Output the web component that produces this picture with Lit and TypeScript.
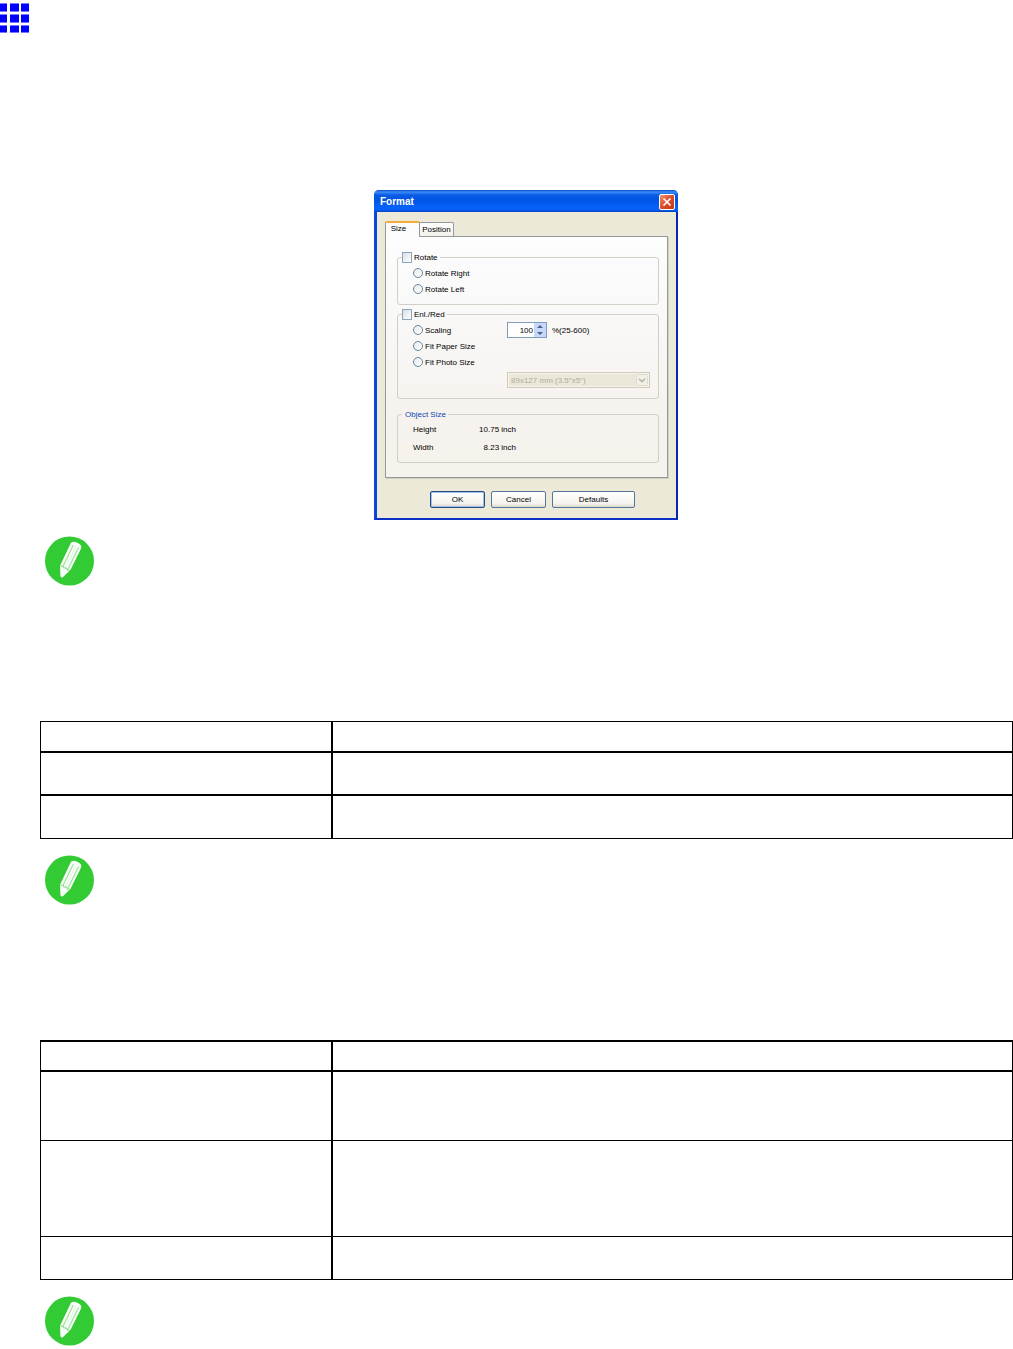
import { LitElement, html, css, svg } from "lit";
import { customElement, property } from "lit/decorators.js";

@customElement("note-icon")
class NoteIcon extends LitElement {
  static styles = css`
    :host { display: block; }
    .icon { display: block; width: 50px; height: 50px; }
  `;
  render() {
    return html`<svg class="icon" viewBox="0 0 50 50" aria-hidden="true">
      <circle cx="24.5" cy="25" r="24.5" fill="#33cb33" />
      <path d="M26 6.8 Q27.4 5 30.4 6 Q34.6 7.2 36 9.4 Q36.8 11 35.6 13.4 L25.4 34 L17.8 41.2 Q15.6 42 15.4 39.4 L15 29.8 Z" fill="#fafefa" />
      <path d="M28.4 9 L18 30.4 M33.6 11.4 L23.2 32.8" stroke="#9fe29d" stroke-width="1.2" fill="none" />
      <path d="M31 10.2 L20.6 31.6" stroke="#d5f2d2" stroke-width="0.8" fill="none" />
      <path d="M15.4 30.4 Q18 29.6 19 32 Q22 31.4 22.6 34.2 L25 34" stroke="#8fdd8c" stroke-width="1.2" fill="none" />
    </svg>`;
  }
}

@customElement("format-dialog")
class FormatDialog extends LitElement {
  static styles = css`
    :host { display: block; width: 304px; font: 8px/11px "Liberation Sans", Arial, sans-serif; color: #000; }
    * { box-sizing: border-box; }
    button, input, select { font: inherit; color: inherit; margin: 0; padding: 0; border-radius: 0; }
    .window { border: solid; border-width: 0 2px 2px 3px; border-color: #0a46dc; border-right-color: #0626b4; border-bottom-color: #0a30c4; border-radius: 5px 5px 0 0; background: #ece9d8; }
    .titlebar { display: flex; align-items: center; justify-content: space-between; height: 22px; margin: 0 -2px 0 -3px; padding: 1px 3px 0 6px; border-radius: 5px 5px 0 0; background: linear-gradient(#0a49c8 0, #3c8cf8 2px, #0a5ce6 5px, #0054e3 10px, #0562fa 17px, #0560f4 20px, #0240bc); }
    .title { margin: 0; font-size: 10px; line-height: 14px; font-weight: bold; color: #fff; }
    .close { display: grid; place-items: center; width: 16px; height: 16px; border: 1px solid #fff; border-radius: 2px; background: linear-gradient(135deg, #ee9278, #dc4d28 50%, #bd3a14); }
    .close svg { width: 10px; height: 10px; }
    .body { padding: 9px 8px 10px 8px; }
    .tabs { display: flex; align-items: flex-end; height: 15px; }
    .tab { width: 35px; height: 14px; border: 1px solid #919b9c; border-bottom: 0; border-radius: 2px 2px 0 0; background: linear-gradient(#fff, #f2f1ea); }
    .tab.active { height: 16px; align-self: flex-start; z-index: 1; padding: 0 8px 3px 0; border-top: 2px solid #f5ab38; background: #fcfcfe; }
    .tab + .tab { margin-left: -1px; }
    .panel { padding: 15px 8px 14px 11px; border: 1px solid #919b9c; background: linear-gradient(#fdfdfe, #f9f8f7 35%, #f6f2ee 75%, #f5f3ec); box-shadow: 1px 1px 0 #d3cfbf; }
    .group { min-width: 0; margin: 0 0 4px; padding: 2px 4px 7px; border: 1px solid #d0d0c6; border-radius: 3px; }
    .group.scale { margin-bottom: 10px; padding-bottom: 10px; }
    .group.object { margin-bottom: 0; padding: 1px 4px 5px; }
    .legend { display: flex; height: 11px; padding: 0 2px 0 0; }
    .object .legend { padding-left: 3px; color: #0a46b8; }
    .choice { display: flex; align-items: center; gap: 2px; white-space: nowrap; }
    .check, .radio { appearance: none; flex: none; width: 10px; height: 10px; border: 1px solid #8aa5bf; background: linear-gradient(135deg, #dcdfe0, #fff); }
    .check { height: 11px; }
    .radio { border-radius: 50%; border-color: #66869f; background: linear-gradient(135deg, #e6eaec, #fff); }
    .row { display: grid; grid-template-columns: 94px 40px auto; align-items: center; height: 16px; margin-left: 11px; }
    .spinner { display: flex; height: 16px; border: 1px solid #7f9db9; background: #fff; }
    .number { appearance: none; flex: 1; min-width: 0; border: 0; padding-right: 1px; background: none; text-align: right; }
    .steps { display: grid; width: 12px; }
    .step { display: grid; place-items: center; border: 0; background: #c8d8fc; }
    .step svg { width: 8px; height: 5px; }
    .unit { padding-left: 5px; }
    .combo { display: grid; height: 16px; margin: 2px 4px 0 105px; }
    .combo > * { grid-area: 1 / 1; }
    .select { appearance: none; width: 100%; padding: 0 14px 0 3px; border: 1px solid #cfccbb; outline: 1px solid #f5f3ec; outline-offset: -2px; background: #ebe7d9; color: #b2ad96; opacity: 1; }
    .arrow { justify-self: end; align-self: center; width: 12px; height: 12px; margin-right: 2px; pointer-events: none; }
    .sizes { display: grid; grid-template-columns: 54px 49px; line-height: 18px; margin: 0 0 0 11px; }
    .sizes dd { margin: 0; text-align: right; }
    .actions { display: flex; justify-content: flex-end; gap: 6px; padding: 13px 33px 0 0; }
    .action { width: 55px; height: 17px; border: 1px solid #55779c; border-radius: 2px; background: linear-gradient(#fff, #f5f4ef 75%, #dcd8cb); }
    .action.primary { border-color: #244a80; box-shadow: inset 0 0 0 1px #a4c0ee; }
    .action.wide { width: 83px; }
  `;

  private radio(group: string, text: string) {
    return html`<label class="choice"><input class="radio" type="radio" name=${group} />${text}</label>`;
  }

  private step(label: string, d: string) {
    return html`<button class="step" type="button" aria-label=${label}>
      <svg viewBox="0 0 8 5">${svg`<path d=${d} fill="#4d6185" />`}</svg>
    </button>`;
  }

  render() {
    return html`
      <section class="window" role="dialog" aria-labelledby="title">
        <header class="titlebar">
          <h2 class="title" id="title">Format</h2>
          <button class="close" type="button" aria-label="Close">
            <svg viewBox="0 0 10 10"><path d="M1.5 1.5 L8.5 8.5 M8.5 1.5 L1.5 8.5" stroke="#fff" stroke-width="1.7" /></svg>
          </button>
        </header>
        <div class="body">
          <div class="tabs" role="tablist">
            <button class="tab active" role="tab" aria-selected="true">Size</button>
            <button class="tab" role="tab" aria-selected="false">Position</button>
          </div>
          <div class="panel" role="tabpanel">
            <fieldset class="group">
              <legend class="legend"><label class="choice"><input class="check" type="checkbox" />Rotate</label></legend>
              <div class="row">${this.radio("rotate", "Rotate Right")}</div>
              <div class="row">${this.radio("rotate", "Rotate Left")}</div>
            </fieldset>
            <fieldset class="group scale">
              <legend class="legend"><label class="choice"><input class="check" type="checkbox" />Enl./Red</label></legend>
              <div class="row">
                ${this.radio("scale", "Scaling")}
                <div class="spinner">
                  <input class="number" id="percent" type="text" inputmode="numeric" .value=${"100"} />
                  <div class="steps">
                    ${this.step("Increase", "M1 4 L4 1 L7 4 Z")}
                    ${this.step("Decrease", "M1 1 L4 4 L7 1 Z")}
                  </div>
                </div>
                <label class="unit" for="percent">%(25-600)</label>
              </div>
              <div class="row">${this.radio("scale", "Fit Paper Size")}</div>
              <div class="row">${this.radio("scale", "Fit Photo Size")}</div>
              <div class="combo">
                <select class="select" aria-label="Photo size" disabled>
                  <option>89x127 mm (3.5"x5")</option>
                </select>
                <svg class="arrow" viewBox="0 0 12 12" aria-hidden="true">
                  <rect x="0.5" y="0.5" width="11" height="11" rx="1" fill="#f2f0e8" stroke="#dedbcf" />
                  <path d="M3 4.8 L6 7.6 L9 4.8" fill="none" stroke="#bdb9a7" stroke-width="1.8" />
                </svg>
              </div>
            </fieldset>
            <fieldset class="group object">
              <legend class="legend">Object Size</legend>
              <dl class="sizes">
                <dt>Height</dt><dd>10.75 inch</dd>
                <dt>Width</dt><dd>8.23 inch</dd>
              </dl>
            </fieldset>
          </div>
          <div class="actions">
            <button class="action primary" type="button">OK</button>
            <button class="action" type="button">Cancel</button>
            <button class="action wide" type="button">Defaults</button>
          </div>
        </div>
      </section>`;
  }
}

@customElement("ruled-table")
class RuledTable extends LitElement {
  @property({ type: Boolean }) tall = false;

  static styles = css`
    :host { display: block; }
    .table { width: 100%; table-layout: fixed; border-collapse: separate; border-spacing: 0; }
    .key { width: 292px; }
    .cell { box-sizing: border-box; height: 43px; padding: 0; border: solid #000; border-width: 1px; }
    .head .cell { height: 31px; }
    .short .last .cell { height: 44px; }
    .tall .head .cell { border-top-width: 2px; }
    .tall .medium .cell { height: 70px; }
    .tall .large .cell { height: 96px; border-top: 0; }
    .tall .last .cell { border-top: 0; }
  `;

  render() {
    const rows = this.tall ? ["medium", "large", "last"] : ["", "last"];
    return html`<table class="table ${this.tall ? "tall" : "short"}">
      <colgroup><col class="key" /><col /></colgroup>
      <thead><tr class="head"><th class="cell"></th><th class="cell"></th></tr></thead>
      <tbody>
        ${rows.map((r) => html`<tr class=${r}><td class="cell"></td><td class="cell"></td></tr>`)}
      </tbody>
    </table>`;
  }
}

@customElement("app-root")
class AppRoot extends LitElement {
  static styles = css`
    :host { display: block; background: #fff; }
    .top { padding-top: 3px; }
    .mark { display: block; width: 30px; height: 30px; }
    .content { padding: 157px 0 3px 40px; }
    .figure { display: flex; justify-content: center; margin: 0; padding-right: 1px; }
    .note { padding: 16px 0 135px 5px; }
    .note.last { padding-bottom: 0; }
  `;

  render() {
    const xs = [[0, 7], [10, 9], [21, 8]];
    const ys = [[0, 9], [11, 9], [22, 8]];
    return html`
      <header class="top">
        <svg class="mark" viewBox="0 0 30 30" aria-hidden="true">
          ${ys.map(([y, h]) => xs.map(([x, w]) => svg`
            <rect x=${x} y=${y} width=${w} height=${h} fill="#7878ff" />
            <rect x=${x} y=${y + 1} width=${w} height=${h - 2} fill="#0000ff" />`))}
        </svg>
      </header>
      <main class="content">
        <figure class="figure"><format-dialog></format-dialog></figure>
        <div class="note"><note-icon></note-icon></div>
        <ruled-table></ruled-table>
        <div class="note"><note-icon></note-icon></div>
        <ruled-table tall></ruled-table>
        <div class="note last"><note-icon></note-icon></div>
      </main>`;
  }
}
